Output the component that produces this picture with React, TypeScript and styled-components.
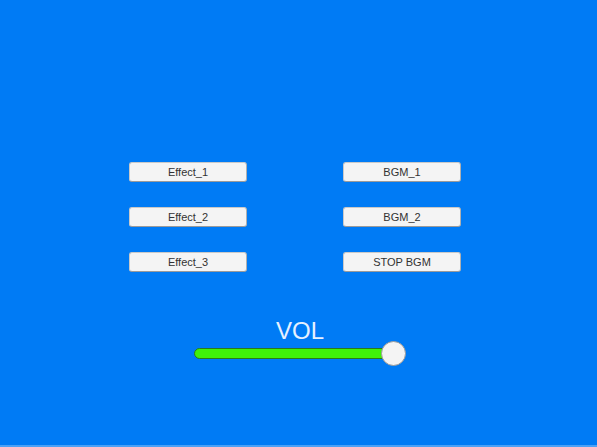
import React from "react";
import styled, { createGlobalStyle } from "styled-components";

const Global = createGlobalStyle`
  html, body { margin: 0; padding: 0; }
  body { width: 597px; height: 447px; overflow: hidden; }
`;

const Screen = styled.div`
  width: 597px;
  height: 447px;
  box-sizing: border-box;
  background: #007bf5;
  border-bottom: 2px solid #4aa1f7;
  display: flex;
  flex-direction: column;
  align-items: flex-start;
  padding-top: 162px;
  font-family: "Liberation Sans", Arial, sans-serif;
`;

const ButtonGrid = styled.div`
  margin-left: 129px;
  display: grid;
  grid-template-columns: 118px 118px;
  column-gap: 96px;
  row-gap: 25px;
`;

const Btn = styled.button`
  width: 118px;
  height: 20px;
  box-sizing: border-box;
  margin: 0;
  padding: 0;
  background: #f4f4f4;
  border: 1px solid #c9c9c9;
  border-bottom-color: #9a9a9a;
  border-right-color: #b0b0b0;
  border-radius: 3px;
  font-family: "Liberation Sans", Arial, sans-serif;
  font-size: 11px;
  color: #323232;
  line-height: 18px;
`;

const VolumeBlock = styled.div`
  margin-left: 194px;
  margin-top: 47px;
  width: 212px;
  display: flex;
  flex-direction: column;
  align-items: stretch;
`;

const VolLabel = styled.div`
  text-align: center;
  font-size: 24px;
  line-height: 24px;
  color: #e6f1ff;
  height: 22px;
`;

const SliderRow = styled.div`
  position: relative;
  height: 24px;
  display: flex;
  align-items: center;
`;

const Track = styled.div`
  width: 200px;
  height: 11px;
  box-sizing: border-box;
  background: #40f208;
  border: 1px solid #2a7a1a;
  border-radius: 6px;
`;

const Knob = styled.div`
  position: absolute;
  left: 187px;
  top: 0;
  width: 25px;
  height: 25px;
  box-sizing: border-box;
  border-radius: 50%;
  background: #f4f4f4;
  border: 1px solid #9a9a9a;
`;

const labels = [
  ["Effect_1", "BGM_1"],
  ["Effect_2", "BGM_2"],
  ["Effect_3", "STOP BGM"],
];

export default function App() {
  return (
    <>
      <Global />
      <Screen>
        <ButtonGrid>
          {labels.flat().map((l) => (
            <Btn key={l}>{l}</Btn>
          ))}
        </ButtonGrid>
        <VolumeBlock>
          <VolLabel>VOL</VolLabel>
          <SliderRow>
            <Track />
            <Knob />
          </SliderRow>
        </VolumeBlock>
      </Screen>
    </>
  );
}
